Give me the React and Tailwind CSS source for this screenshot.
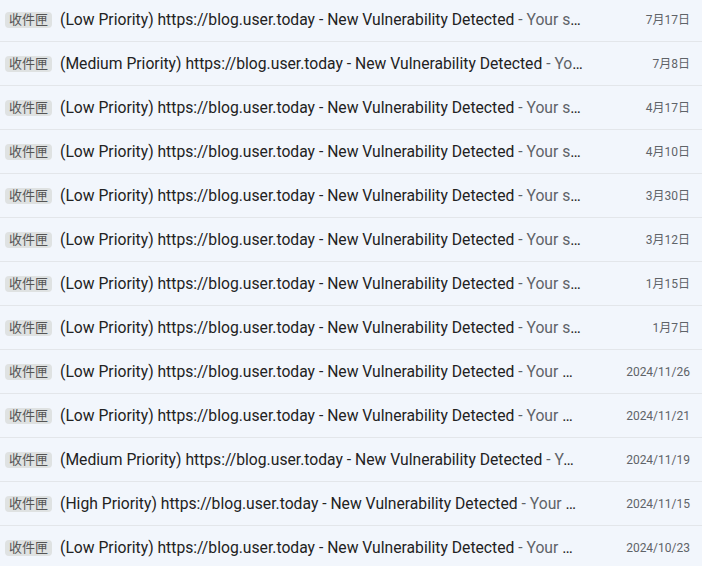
import React from "react";

const rows = [
  ["Low", "Your security scan found issues", "7月17日"],
  ["Medium", "Your security scan found issues", "7月8日"],
  ["Low", "Your security scan found issues", "4月17日"],
  ["Low", "Your security scan found issues", "4月10日"],
  ["Low", "Your security scan found issues", "3月30日"],
  ["Low", "Your security scan found issues", "3月12日"],
  ["Low", "Your security scan found issues", "1月15日"],
  ["Low", "Your security scan found issues", "1月7日"],
  ["Low", "Your security scan found issues", "2024/11/26"],
  ["Low", "Your security scan found issues", "2024/11/21"],
  ["Medium", "Your security scan found issues", "2024/11/19"],
  ["High", "Your security scan found issues", "2024/11/15"],
  ["Low", "Your security scan found issues", "2024/10/23"],
];

export default function App() {
  return (
    <div
      className="w-[702px] h-[566px] overflow-hidden bg-[#f2f6fc]"
      style={{ fontFamily: 'Roboto, "Noto Sans CJK TC", sans-serif' }}
    >
      <div className="-mt-[2px]">
        {rows.map(([p, snip, date], i) => (
          <div
            key={i}
            className="h-[44px] flex items-center border-b border-[#e3e6ea] pl-[5px] pr-[12px]"
          >
            <span className="shrink-0 h-[16px] px-[4px] rounded-[4px] bg-[#dfe2e2] text-[#555555] text-[13px] leading-[16px]">
              收件匣
            </span>
            <div className="ml-[8px] mr-[48px] flex-1 min-w-0 truncate text-[15.7px] text-[#222222]">
              ({p} Priority) https://blog.user.today - New Vulnerability Detected
              <span className="text-[#5f6368]"> - {snip}</span>
            </div>
            <div className="shrink-0 min-w-[55px] text-right text-[12px] text-[#5f6368]">{date}</div>
          </div>
        ))}
      </div>
    </div>
  );
}
